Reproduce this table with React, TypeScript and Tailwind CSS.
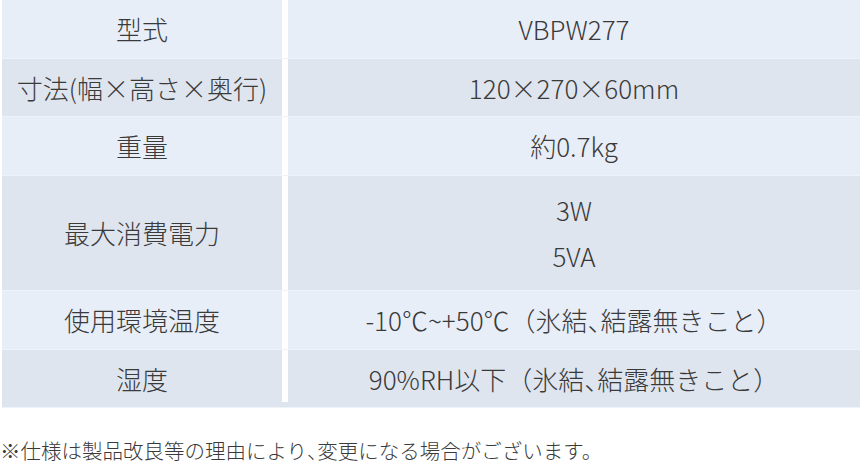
import React from "react";

const LIGHT = "bg-[#e8eef8]";
const DARK = "bg-[#dfe5ef]";

function Row({
  label,
  children,
  dark,
  h,
  last,
}: {
  label: string;
  children: React.ReactNode;
  dark: boolean;
  h: string;
  last?: boolean;
}) {
  const bg = dark ? DARK : LIGHT;
  return (
    <div className={`flex ${h} ${bg}`}>
      <div className="flex w-[280px] items-center justify-center">{label}</div>
      <div className={`w-[6px] self-start bg-white ${last ? "h-[52px]" : "h-full"}`} />
      <div className="flex flex-1 flex-col items-center justify-center">{children}</div>
    </div>
  );
}

function Sep() {
  return <div className="h-[1px] bg-[#eef3fa]" />;
}

function Comma() {
  return <span className="[font-feature-settings:'halt']">、</span>;
}

export default function App() {
  return (
    <div
      className="h-[464px] w-[860px] overflow-hidden bg-white font-light text-[#3a3a3a]"
      style={{ fontFamily: '"Noto Sans CJK JP", "Noto Sans", sans-serif' }}
    >
      <div className="pl-[2px] text-[26px] leading-none">
        <Row label="型式" dark={false} h="h-[58px]">
          VBPW277
        </Row>
        <Sep />
        <Row label="寸法(幅×高さ×奥行)" dark h="h-[57px]">
          120×270×60mm
        </Row>
        <Sep />
        <Row label="重量" dark={false} h="h-[58px]">
          約0.7kg
        </Row>
        <Sep />
        <Row label="最大消費電力" dark h="h-[114px]">
          <div className="flex flex-col items-center gap-[20px]">
            <span>3W</span>
            <span>5VA</span>
          </div>
        </Row>
        <Sep />
        <Row label="使用環境温度" dark={false} h="h-[58px]">
          <span>
            -10℃~+50℃（氷結
            <Comma />
            結露無きこと）
          </span>
        </Row>
        <Sep />
        <Row label="湿度" dark h="h-[57px]" last>
          <span>
            90%RH以下（氷結
            <Comma />
            結露無きこと）
          </span>
        </Row>
        <div className="h-[1px] bg-[#eef3fa]" />
      </div>
      <div className="mt-[32px] text-[20.5px] leading-none">
        ※仕様は製品改良等の理由により
        <Comma />
        変更になる場合がございます。
      </div>
    </div>
  );
}
